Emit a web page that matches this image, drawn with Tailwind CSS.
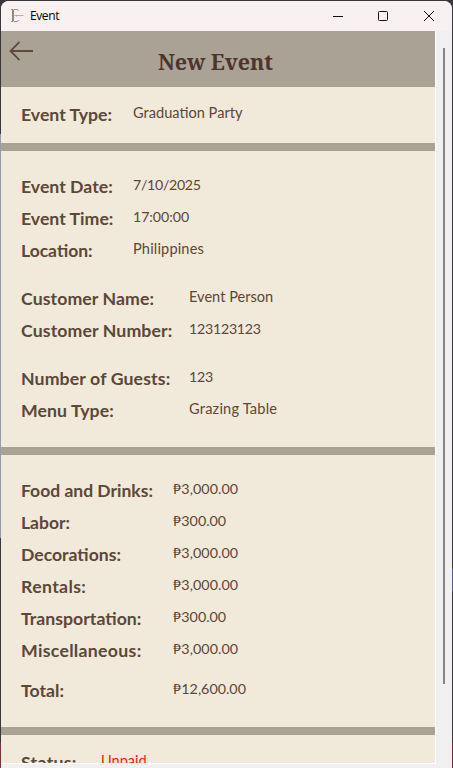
<!DOCTYPE html>
<html lang="en">
<head>
<meta charset="utf-8">
<title>Event</title>
<script src="https://cdn.jsdelivr.net/npm/@tailwindcss/browser@4"></script>
</head>
<body class="h-[768px] w-[453px] overflow-hidden bg-[#39373b]">
<div class="relative h-[768px] w-[453px] overflow-hidden bg-linear-to-b from-[#39373b] from-[134px] via-[#929db0] via-[134px] to-[#929db0] to-[538px] pl-px pr-px pt-px">
  <div class="absolute left-0 top-[538px] h-[205px] w-px bg-[#39373b]"></div>
  <div class="absolute left-0 top-[743px] h-[25px] w-px bg-[#7b3446]"></div>
  <div class="absolute right-0 top-0 h-[743px] w-px bg-[#39373b]"></div>
  <div class="absolute right-0 top-[569px] h-[22px] w-px bg-[#5a5690]"></div>
  <div class="absolute right-0 top-[743px] h-[25px] w-px bg-[#6b2d42]"></div>
  <div class="absolute left-0 top-0 h-5 w-full bg-[#39373b]"></div>
  <div class="relative flex h-[767px] flex-col overflow-hidden rounded-t-[8px] bg-[#f0f0f0]">
    <header class="flex h-[30px] shrink-0 items-center bg-[#f9f0f1] pl-[9px]">
      <svg class="h-[16px] w-[16px]" viewBox="0 0 16 16" fill="none">
        <path d="M3 2v11" stroke="#85796f" stroke-width="1.800"/>
        <path d="M1 1.500h2.500M1 13.500h2.500" stroke="#9d9289"/>
        <path d="M4 1.500h3.500l1 1.500M4 13.500h3.500l1-1.500" stroke="#9d9289"/>
        <path d="M4.500 7.500h9" stroke="#b8afab"/><path d="M6.500 7v1.500" stroke="#a89e98"/>
      </svg>
      <span class="ml-[4px] font-['Open_Sans',sans-serif] text-[12px] leading-[16px] tracking-[-0.4px] text-black">Event</span>
      <svg class="ml-auto mr-[17px] h-[12px] w-[102px]" viewBox="0 0 102 12" fill="none" stroke="#111">
        <path d="M0 6.500h10"/><rect x="45.500" y="1.500" width="9" height="9" rx="1"/><path d="M91 1l10 10M101 1L91 11"/>
      </svg>
    </header>
    <div class="flex h-[737px]">
      <main class="h-[733px] w-[435px] overflow-hidden border-b border-r border-white bg-[#f1e9da] font-['Lato','Noto_Sans',sans-serif] text-[#5c4738]">
        <div class="flex h-[56px] bg-[#aaa294]">
          <svg class="ml-[8px] mt-[9px] h-[22px] w-[25px] shrink-0" viewBox="0 0 25 22" fill="none" stroke="#62493e" stroke-width="1.800"><path d="M24 11H1.500M10.500 1.800L1.500 11l9 9.200"/></svg>
          <h1 class="ml-[124px] mt-[15px] whitespace-nowrap font-['Noto_Serif','DejaVu_Serif_Condensed','DejaVu_Serif',serif] text-[21.500px] font-bold leading-[32px] tracking-[-0.1px] text-[#4e342e]">New Event</h1>
        </div>
        <section class="h-[56px] px-[20px] py-[12px]">
          <div class="grid h-8 grid-cols-[112px_1fr] whitespace-nowrap"><b class="text-[17.700px] leading-8">Event Type:</b><span class="text-[14.600px] leading-7">Graduation Party</span></div>
        </section>
        <div class="h-2 bg-[#aaa294]"></div>
        <section class="h-[296px] p-[20px] whitespace-nowrap">
          <div class="grid h-8 grid-cols-[112px_1fr]"><b class="text-[17.700px] leading-8">Event Date:</b><span class="text-[14.200px] leading-7 tracking-[-0.3px]">7/10/2025</span></div>
          <div class="grid h-8 grid-cols-[112px_1fr]"><b class="text-[17.700px] leading-8">Event Time:</b><span class="text-[14.200px] leading-7 tracking-[-0.050px]">17:00:00</span></div>
          <div class="grid h-8 grid-cols-[112px_1fr]"><b class="text-[17.500px] leading-8">Location:</b><span class="text-[14.600px] leading-7 tracking-[0.150px]">Philippines</span></div>
          <div class="mt-4 grid h-8 grid-cols-[168px_1fr]"><b class="text-[17.700px] leading-8 tracking-[0.080px]">Customer Name:</b><span class="text-[14.600px] leading-7">Event Person</span></div>
          <div class="grid h-8 grid-cols-[168px_1fr]"><b class="text-[17.700px] leading-8 tracking-[0.110px]">Customer Number:</b><span class="text-[14.200px] leading-7 tracking-[-0.250px]">123123123</span></div>
          <div class="mt-4 grid h-8 grid-cols-[168px_1fr]"><b class="text-[17.700px] leading-8 tracking-[0.120px]">Number of Guests:</b><span class="text-[14.200px] leading-7 tracking-[-0.2px]">123</span></div>
          <div class="grid h-8 grid-cols-[168px_1fr]"><b class="text-[17.700px] leading-8 tracking-[0.080px]">Menu Type:</b><span class="text-[14.600px] leading-7 tracking-[0.2px]">Grazing Table</span></div>
        </section>
        <div class="h-2 bg-[#aaa294]"></div>
        <section class="h-[272px] p-[20px] whitespace-nowrap">
          <div class="grid h-8 grid-cols-[152px_1fr]"><b class="text-[17.500px] leading-8">Food and Drinks:</b><span class="text-[14.300px] leading-7 tracking-[0.050px]">₱3,000.00</span></div>
          <div class="grid h-8 grid-cols-[152px_1fr]"><b class="text-[17.500px] leading-8">Labor:</b><span class="text-[14.300px] leading-7">₱300.00</span></div>
          <div class="grid h-8 grid-cols-[152px_1fr]"><b class="text-[17.600px] leading-8">Decorations:</b><span class="text-[14.300px] leading-7 tracking-[0.050px]">₱3,000.00</span></div>
          <div class="grid h-8 grid-cols-[152px_1fr]"><b class="text-[17.700px] leading-8 tracking-[0.350px]">Rentals:</b><span class="text-[14.300px] leading-7 tracking-[0.050px]">₱3,000.00</span></div>
          <div class="grid h-8 grid-cols-[152px_1fr]"><b class="text-[17.700px] leading-8">Transportation:</b><span class="text-[14.300px] leading-7">₱300.00</span></div>
          <div class="grid h-8 grid-cols-[152px_1fr]"><b class="text-[17.700px] leading-8 tracking-[0.3px]">Miscellaneous:</b><span class="text-[14.300px] leading-7 tracking-[0.050px]">₱3,000.00</span></div>
          <div class="mt-2 grid h-8 grid-cols-[152px_1fr]"><b class="text-[17.700px] leading-8">Total:</b><span class="text-[14.300px] leading-7">₱12,600.00</span></div>
        </section>
        <div class="h-2 bg-[#aaa294]"></div>
        <section class="px-[20px] pt-[12px]">
          <div class="grid h-8 grid-cols-[80px_1fr]"><b class="text-[17.700px] leading-8 tracking-[0.3px]">Status:</b><span class="text-[14.600px] leading-7 text-[#ff1a0a]">Unpaid</span></div>
        </section>
      </main>
      <div class="ml-[7px] mt-[17px] h-[636px] w-[2px] bg-[#858585]"></div>
    </div>
  </div>
</div>
</body>
</html>
